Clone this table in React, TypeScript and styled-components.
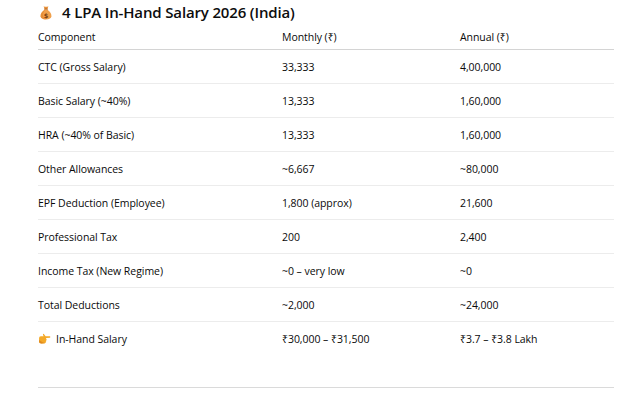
import React from "react";
import styled, { createGlobalStyle } from "styled-components";

const GlobalStyle = createGlobalStyle`
  html, body {
    margin: 0;
    padding: 0;
    background: #ffffff;
  }
  body {
    font-family: "Open Sans", "Noto Sans", sans-serif;
    color: #0d0d0d;
  }
`;

const Page = styled.div`
  width: 624px;
  height: 402px;
  padding-left: 38px;
  box-sizing: border-box;
  overflow: hidden;
`;

const Title = styled.h2`
  display: flex;
  align-items: center;
  gap: 10px;
  height: 24px;
  margin: 0;
  padding-left: 2px;
  font-size: 15px;
  font-weight: 600;
  color: #0d0d0d;
  letter-spacing: -0.15px;
`;

const Table = styled.div`
  width: 576px;
  font-size: 10.5px;
`;

const Row = styled.div<{ $head?: boolean; $last?: boolean }>`
  display: grid;
  grid-template-columns: 244px 178px 1fr;
  align-items: center;
  height: ${(p) => (p.$head ? "25px" : "33px")};
  border-bottom: ${(p) =>
    p.$last ? "none" : p.$head ? "1px solid #d4d4d4" : "1px solid #ececec"};
`;

const Cell = styled.div`
  display: flex;
  align-items: center;
  gap: 5px;
  white-space: nowrap;
  color: #0a0a0a;
  letter-spacing: -0.05px;
`;

const Rule = styled.hr`
  width: 576px;
  margin: 32px 0 0;
  border: none;
  border-top: 1px solid #dadada;
`;

const MoneyBag = () => (
  <svg width="12" height="15" viewBox="0 0 12 15">
    <path d="M3.6 1.2 Q6 2.4 8.4 1.2 L7.4 4 L4.6 4 Z" fill="#e8923a" />
    <rect x="4.2" y="3.6" width="3.6" height="1.2" rx="0.5" fill="#b5611d" />
    <path
      d="M4.4 4.8 Q0.2 8 0.6 11.6 Q1 14.4 6 14.4 Q11 14.4 11.4 11.6 Q11.8 8 7.6 4.8 Z"
      fill="#f0a04b"
    />
    <path
      d="M4.4 4.8 Q0.2 8 0.6 11.6 Q1 14.4 6 14.4 Q3 13 3 10 Q3.2 7 5 4.8 Z"
      fill="#e0822a"
      opacity="0.6"
    />
    <text
      x="6"
      y="12.6"
      textAnchor="middle"
      fontSize="6.5"
      fontWeight="700"
      fontFamily="DejaVu Sans, sans-serif"
      fill="#7a3e10"
    >
      $
    </text>
  </svg>
);

const PointRight = () => (
  <svg width="13" height="12" viewBox="0 0 12 11">
    <path
      d="M1 4.5 Q1 3 2.6 3 L5.2 3 L4.6 1.6 Q4.4 0.6 5.4 0.8 L7 3 L11 3 Q12 3.6 11 4.4 L7.4 4.6 L7.6 5.2 Q8.4 6 7.6 6.6 Q8 7.4 7.2 8 Q7.4 9 6.4 9.4 L3 9.6 Q1 9.6 1 8 Z"
      fill="#f4a928"
    />
    <path d="M1 6.5 L1 8 Q1 9.6 3 9.6 L6.4 9.4 Q4 8.6 1 6.5 Z" fill="#e08a1e" />
  </svg>
);

const rows: [string, string, string][] = [
  ["CTC (Gross Salary)", "33,333", "4,00,000"],
  ["Basic Salary (~40%)", "13,333", "1,60,000"],
  ["HRA (~40% of Basic)", "13,333", "1,60,000"],
  ["Other Allowances", "~6,667", "~80,000"],
  ["EPF Deduction (Employee)", "1,800 (approx)", "21,600"],
  ["Professional Tax", "200", "2,400"],
  ["Income Tax (New Regime)", "~0 – very low", "~0"],
  ["Total Deductions", "~2,000", "~24,000"],
];

export default function App() {
  return (
    <Page>
      <GlobalStyle />
      <Title>
        <MoneyBag />
        <span>4 LPA In-Hand Salary 2026 (India)</span>
      </Title>
      <Table>
        <Row $head>
          <Cell>Component</Cell>
          <Cell>Monthly (₹)</Cell>
          <Cell>Annual (₹)</Cell>
        </Row>
        {rows.map(([name, monthly, annual], i) => (
          <Row key={i}>
            <Cell>{name}</Cell>
            <Cell>{monthly}</Cell>
            <Cell>{annual}</Cell>
          </Row>
        ))}
        <Row $last>
          <Cell>
            <PointRight />
            In-Hand Salary
          </Cell>
          <Cell>₹30,000 – ₹31,500</Cell>
          <Cell>₹3.7 – ₹3.8 Lakh</Cell>
        </Row>
      </Table>
      <Rule />
    </Page>
  );
}
